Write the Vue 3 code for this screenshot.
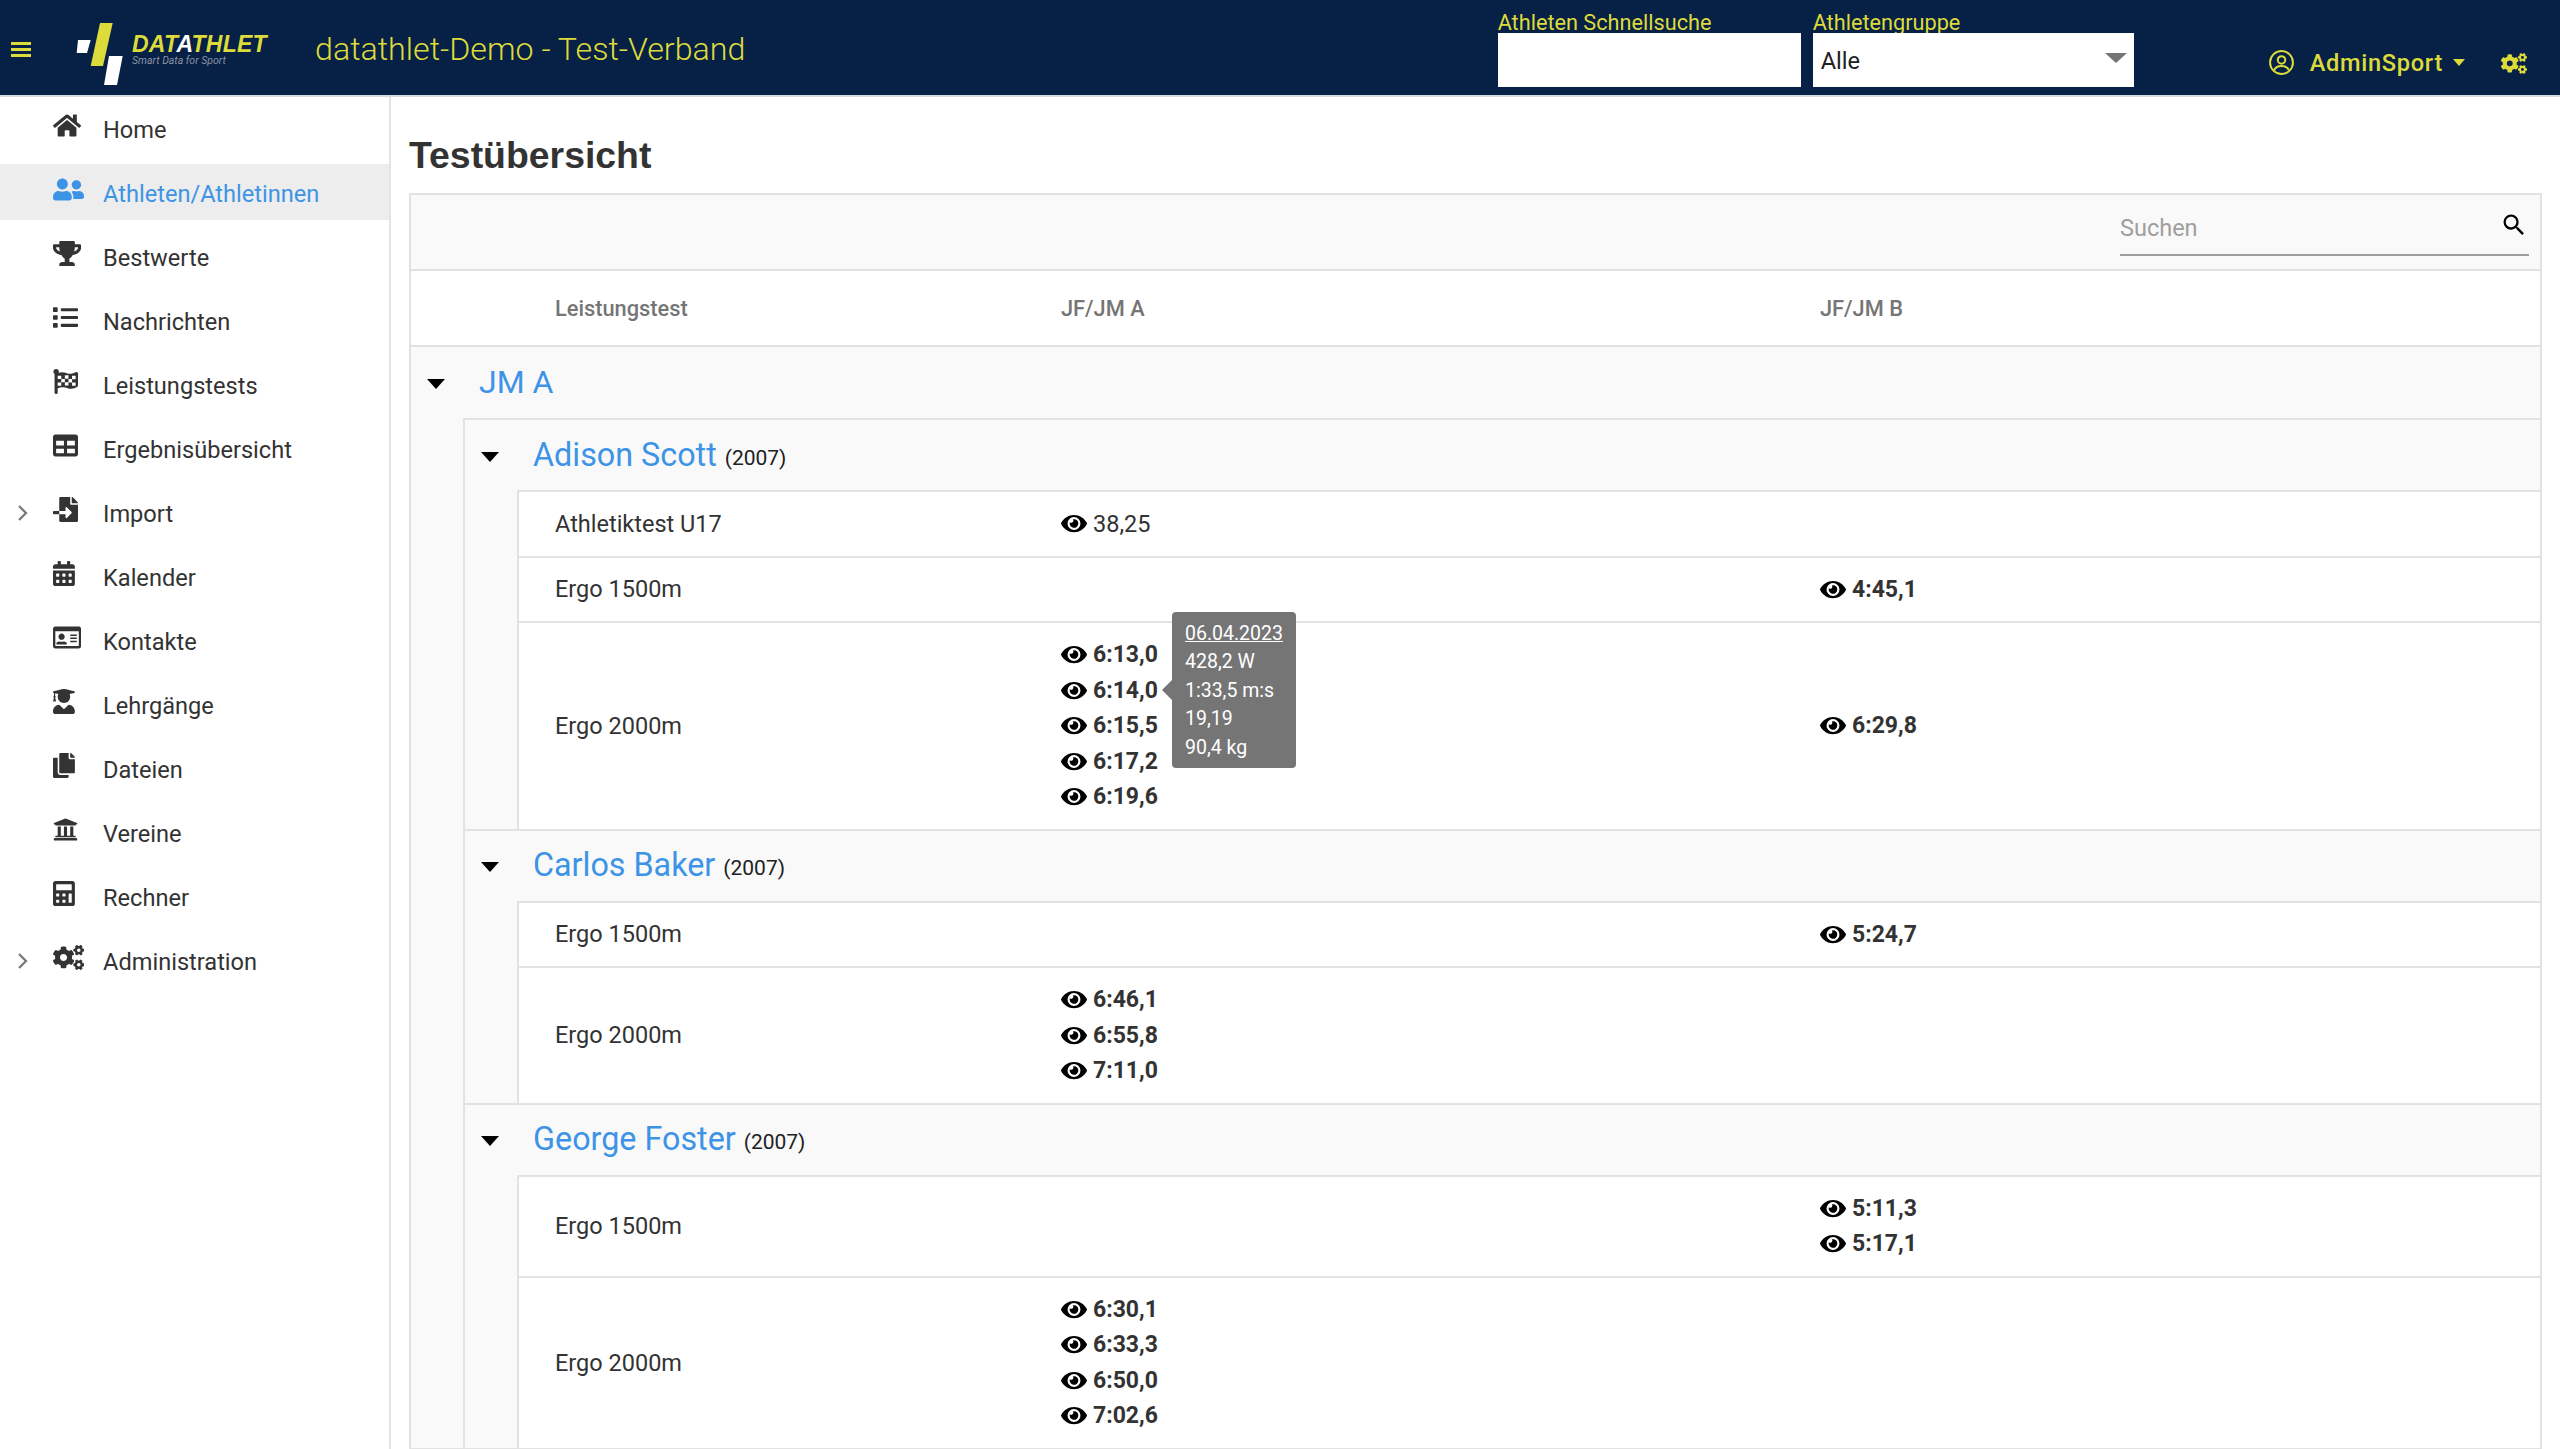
<script setup>
const icons = {
  home: { w: 576, d: 'M280.37 148.26L96 300.11V464a16 16 0 0 0 16 16l112.06-.29a16 16 0 0 0 15.92-16V368a16 16 0 0 1 16-16h64a16 16 0 0 1 16 16v95.64a16 16 0 0 0 16 16.05L464 480a16 16 0 0 0 16-16V300L295.67 148.26a12.19 12.19 0 0 0-15.3 0zM571.6 251.47L488 182.56V44.05a12 12 0 0 0-12-12h-56a12 12 0 0 0-12 12v72.61L318.47 43a48 48 0 0 0-61 0L4.34 251.47a12 12 0 0 0-1.6 16.9l25.5 31A12 12 0 0 0 45.15 301l235.22-193.74a12.19 12.19 0 0 1 15.3 0L530.9 301a12 12 0 0 0 16.9-1.6l25.5-31a12 12 0 0 0-1.7-16.93z' },
  friends: { w: 640, d: 'M192 256c61.9 0 112-50.1 112-112S253.9 32 192 32 80 82.1 80 144s50.1 112 112 112zm76.8 32h-8.3c-20.8 10-43.9 16-68.5 16s-47.6-6-68.5-16h-8.3C51.6 288 0 339.6 0 403.2V432c0 26.5 21.5 48 48 48h288c26.5 0 48-21.5 48-48v-28.8c0-63.6-51.6-115.2-115.2-115.2zM480 256c53 0 96-43 96-96s-43-96-96-96-96 43-96 96 43 96 96 96zm48 32h-3.8c-13.9 4.8-28.6 8-44.2 8s-30.3-3.2-44.2-8H432c-20.4 0-39.2 5.9-55.7 15.4 24.4 26.3 39.7 61.2 39.7 99.8v38.4c0 2.2-.5 4.3-.6 6.4H592c26.5 0 48-21.5 48-48 0-61.9-50.1-112-112-112z' },
  trophy: { w: 576, d: 'M552 64H448V24c0-13.3-10.7-24-24-24H152c-13.3 0-24 10.7-24 24v40H24C10.7 64 0 74.7 0 88v56c0 35.7 22.5 72.4 61.9 100.7 31.5 22.7 69.8 37.1 110 41.7C203.3 338.5 240 360 240 360v72h-48c-35.3 0-64 20.7-64 56v12c0 6.6 5.4 12 12 12h296c6.6 0 12-5.4 12-12v-12c0-35.3-28.7-56-64-56h-48v-72s36.7-21.5 68.1-73.6c40.3-4.6 78.6-19 110-41.7 39.3-28.3 61.9-65 61.9-100.7V88c0-13.3-10.7-24-24-24zM99.3 192.8C74.9 175.2 64 155.6 64 144v-16h64.2c1 32.6 5.8 61.2 12.8 86.2-15.1-5.2-29.2-12.4-41.7-21.4zM512 144c0 16.1-17.7 36.1-35.3 48.8-12.5 9-26.7 16.2-41.8 21.4 7-25 11.8-53.6 12.8-86.2H512v16z' },
  list: { w: 512, d: 'M80 368H16a16 16 0 0 0-16 16v64a16 16 0 0 0 16 16h64a16 16 0 0 0 16-16v-64a16 16 0 0 0-16-16zm0-320H16A16 16 0 0 0 0 64v64a16 16 0 0 0 16 16h64a16 16 0 0 0 16-16V64a16 16 0 0 0-16-16zm0 160H16a16 16 0 0 0-16 16v64a16 16 0 0 0 16 16h64a16 16 0 0 0 16-16v-64a16 16 0 0 0-16-16zm416 176H176a16 16 0 0 0-16 16v32a16 16 0 0 0 16 16h320a16 16 0 0 0 16-16v-32a16 16 0 0 0-16-16zm0-320H176a16 16 0 0 0-16 16v32a16 16 0 0 0 16 16h320a16 16 0 0 0 16-16V80a16 16 0 0 0-16-16zm0 160H176a16 16 0 0 0-16 16v32a16 16 0 0 0 16 16h320a16 16 0 0 0 16-16v-32a16 16 0 0 0-16-16z' },
  flag: { w: 512, rule: 'evenodd', d: 'M466.5 66.9c-34.3 15.9-76.5 31.9-117 31.9C296 98.8 251.7 64 184.3 64c-25 0-47.3 4.4-68 12 2.8-7.3 4.1-15.2 3.6-23.6C118.1 24 94.8 1.2 66.3 0 34.3-1.3 8 24.3 8 56c0 19 9.5 35.8 24 45.9V488c0 13.3 10.7 24 24 24h16c13.3 0 24-10.7 24-24v-94.4c28.3-12.1 63.6-22.1 114.4-22.1 53.6 0 97.8 34.8 165.2 34.8 48.2 0 86.7-16.3 122.5-40.9 8.7-6 13.8-15.8 13.8-26.4V95.9c.1-23.3-24.2-38.8-45.4-29zM96 138h74v68H96zM243 128h74v72h-74zM390 140h74v68h-74zM170 206h73v64h-73zM317 206h73v70h-73zM96 275h74v68H96zM243 270h74v70h-74zM390 276h74v66h-74z' },
  table: { w: 512, d: 'M464 32H48C21.49 32 0 53.49 0 80v352c0 26.51 21.49 48 48 48h416c26.51 0 48-21.49 48-48V80c0-26.51-21.49-48-48-48zM224 416H64v-96h160v96zm0-160H64v-96h160v96zm224 160H288v-96h160v96zm0-160H288v-96h160v96z' },
  fileImport: { w: 512, d: 'M16 288c-8.8 0-16 7.2-16 16v32c0 8.8 7.2 16 16 16h112v-64zm489-183L407.1 7c-4.5-4.5-10.6-7-17-7H384v128h128v-6.1c0-6.3-2.5-12.4-7-16.9zm-153 31V0H152c-13.3 0-24 10.7-24 24v264h128v-65.2c0-14.3 17.3-21.4 27.4-11.3L379 308c6.6 6.7 6.6 17.4 0 24l-95.7 96.4c-10.1 10.1-27.4 3-27.4-11.3V352H128v136c0 13.3 10.7 24 24 24h336c13.3 0 24-10.7 24-24V160H376c-13.2 0-24-10.8-24-24z' },
  calendar: { w: 448, d: 'M0 464c0 26.5 21.5 48 48 48h352c26.5 0 48-21.5 48-48V192H0v272zm320-196c0-6.6 5.4-12 12-12h40c6.6 0 12 5.4 12 12v40c0 6.6-5.4 12-12 12h-40c-6.6 0-12-5.4-12-12v-40zm0 128c0-6.6 5.4-12 12-12h40c6.6 0 12 5.4 12 12v40c0 6.6-5.4 12-12 12h-40c-6.6 0-12-5.4-12-12v-40zM192 268c0-6.6 5.4-12 12-12h40c6.6 0 12 5.4 12 12v40c0 6.6-5.4 12-12 12h-40c-6.6 0-12-5.4-12-12v-40zm0 128c0-6.6 5.4-12 12-12h40c6.6 0 12 5.4 12 12v40c0 6.6-5.4 12-12 12h-40c-6.6 0-12-5.4-12-12v-40zM64 268c0-6.6 5.4-12 12-12h40c6.6 0 12 5.4 12 12v40c0 6.6-5.4 12-12 12H76c-6.6 0-12-5.4-12-12v-40zm0 128c0-6.6 5.4-12 12-12h40c6.6 0 12 5.4 12 12v40c0 6.6-5.4 12-12 12H76c-6.6 0-12-5.4-12-12v-40zM400 64h-48V16c0-8.8-7.2-16-16-16h-32c-8.8 0-16 7.2-16 16v48H160V16c0-8.8-7.2-16-16-16h-32c-8.8 0-16 7.2-16 16v48H48C21.5 64 0 85.5 0 112v48h448v-48c0-26.5-21.5-48-48-48z' },
  idCard: { w: 576, d: 'M528 32H48C21.5 32 0 53.5 0 80v352c0 26.5 21.5 48 48 48h480c26.5 0 48-21.5 48-48V80c0-26.5-21.5-48-48-48zm-6 400H54c-3.3 0-6-2.7-6-6V128h480v298c0 3.3-2.7 6-6 6zM352 200c0-4.4 3.6-8 8-8h120c4.4 0 8 3.6 8 8v16c0 4.4-3.6 8-8 8H360c-4.4 0-8-3.6-8-8v-16zm0 64c0-4.4 3.6-8 8-8h120c4.4 0 8 3.6 8 8v16c0 4.4-3.6 8-8 8H360c-4.4 0-8-3.6-8-8v-16zm0 64c0-4.4 3.6-8 8-8h120c4.4 0 8 3.6 8 8v16c0 4.4-3.6 8-8 8H360c-4.4 0-8-3.6-8-8v-16zM176 176c35.3 0 64 28.7 64 64s-28.7 64-64 64-64-28.7-64-64 28.7-64 64-64zM67.1 380.2C75.5 354.5 99.6 336 128 336h8.2c12.3 5.1 25.7 8 39.8 8s27.6-2.9 39.8-8h8.2c28.4 0 52.5 18.5 60.9 44.2 3.2 9.9-5.2 19.8-15.6 19.8H82.7c-10.4 0-18.8-10-15.6-19.8z' },
  graduate: { w: 448, d: 'M319.4 320.6L224 416l-95.4-95.4C57.1 323.7 0 382.2 0 454.4v9.6c0 26.5 21.5 48 48 48h352c26.5 0 48-21.5 48-48v-9.6c0-72.2-57.1-130.7-128.6-133.8zM13.6 79.8l6.4 1.5v58.4c-7 4.2-12 11.5-12 20.3 0 8.4 4.6 15.4 11.1 19.7L3.5 242c-1.7 6.9 2.1 14 7.6 14h41.8c5.5 0 9.3-7.1 7.6-14l-15.6-62.3C51.4 175.4 56 168.4 56 160c0-8.8-5-16.1-12-20.3V87.1l66 15.9c-8.6 17.2-14 36.4-14 57 0 70.7 57.3 128 128 128s128-57.3 128-128c0-20.6-5.3-39.8-14-57l96.3-23.2c18.2-4.4 18.2-27.1 0-31.5l-190.4-46c-13-3.1-26.7-3.1-39.7 0L13.6 48.2c-18.1 4.4-18.1 27.2 0 31.6z' },
  copy: { w: 448, d: 'M320 448v40c0 13.255-10.745 24-24 24H24c-13.255 0-24-10.745-24-24V120c0-13.255 10.745-24 24-24h72v296c0 30.879 25.121 56 56 56h168zm0-344V0H152c-13.255 0-24 10.745-24 24v368c0 13.255 10.745 24 24 24h272c13.255 0 24-10.745 24-24V128H344c-13.2 0-24-10.8-24-24zm120.971-31.029L375.029 7.029A24 24 0 0 0 358.059 0H352v96h96v-6.059a24 24 0 0 0-7.029-16.97z' },
  university: { w: 512, d: 'M496 128v16a8 8 0 0 1-8 8h-24v12c0 6.627-5.373 12-12 12H60c-6.627 0-12-5.373-12-12v-12H24a8 8 0 0 1-8-8v-16a8 8 0 0 1 4.941-7.392l232-88a7.996 7.996 0 0 1 6.118 0l232 88A8 8 0 0 1 496 128zm-24 304H40c-13.255 0-24 10.745-24 24v16a8 8 0 0 0 8 8h464a8 8 0 0 0 8-8v-16c0-13.255-10.745-24-24-24zM96 192v192H60c-6.627 0-12 5.373-12 12v20h416v-20c0-6.627-5.373-12-12-12h-36V192h-64v192h-64V192h-64v192h-64V192H96z' },
  calculator: { w: 448, d: 'M400 0H48C22.4 0 0 22.4 0 48v416c0 25.6 22.4 48 48 48h352c25.6 0 48-22.4 48-48V48c0-25.6-22.4-48-48-48zM128 435c0 6.4-6.4 12.8-12.8 12.8H76.8c-6.4 0-12.8-6.4-12.8-12.8v-38.4c0-6.4 6.4-12.8 12.8-12.8h38.4c6.4 0 12.8 6.4 12.8 12.8V435zm0-128c0 6.4-6.4 12.8-12.8 12.8H76.8c-6.4 0-12.8-6.4-12.8-12.8v-38.4c0-6.4 6.4-12.8 12.8-12.8h38.4c6.4 0 12.8 6.4 12.8 12.8V307zm128 128c0 6.4-6.4 12.8-12.8 12.8h-38.4c-6.4 0-12.8-6.4-12.8-12.8v-38.4c0-6.4 6.4-12.8 12.8-12.8h38.4c6.4 0 12.8 6.4 12.8 12.8V435zm0-128c0 6.4-6.4 12.8-12.8 12.8h-38.4c-6.4 0-12.8-6.4-12.8-12.8v-38.4c0-6.4 6.4-12.8 12.8-12.8h38.4c6.4 0 12.8 6.4 12.8 12.8V307zm128 128c0 6.4-6.4 12.8-12.8 12.8h-38.4c-6.4 0-12.8-6.4-12.8-12.8V268.8c0-6.4 6.4-12.8 12.8-12.8h38.4c6.4 0 12.8 6.4 12.8 12.8V435zm0-256c0 6.4-6.4 12.8-12.8 12.8H76.8c-6.4 0-12.8-6.4-12.8-12.8V76.8C64 70.4 70.4 64 76.8 64h294.4c6.4 0 12.8 6.4 12.8 12.8V179z' },
  cogs: { w: 640, d: 'M512.1 191l-8.2 14.3c-3 5.3-9.4 7.5-15.1 5.4-11.8-4.4-22.6-10.7-32.1-18.6-4.6-3.8-5.8-10.5-2.8-15.7l8.2-14.3c-6.9-8-12.3-17.3-15.9-27.4h-16.5c-6 0-11.2-4.3-12.2-10.3-2-12-2.1-24.6 0-37.1 1-6 6.2-10.4 12.2-10.4h16.5c3.6-10.1 9-19.4 15.9-27.4l-8.2-14.3c-3-5.2-1.9-11.9 2.8-15.7 9.5-7.9 20.4-14.2 32.1-18.6 5.7-2.1 12.1.1 15.1 5.4l8.2 14.3c10.5-1.9 21.2-1.9 31.7 0L552 6.3c3-5.3 9.4-7.5 15.1-5.4 11.8 4.4 22.6 10.7 32.1 18.6 4.6 3.8 5.8 10.5 2.8 15.7l-8.2 14.3c6.9 8 12.3 17.3 15.9 27.4h16.5c6 0 11.2 4.3 12.2 10.3 2 12 2.1 24.6 0 37.1-1 6-6.2 10.4-12.2 10.4h-16.5c-3.6 10.1-9 19.4-15.9 27.4l8.2 14.3c3 5.2 1.9 11.9-2.8 15.7-9.5 7.9-20.4 14.2-32.1 18.6-5.7 2.1-12.1-.1-15.1-5.4l-8.2-14.3c-10.4 1.9-21.2 1.9-31.7 0zm-10.5-58.8c38.5 29.6 82.4-14.3 52.8-52.8-38.5-29.7-82.4 14.3-52.8 52.8zM386.3 286.1l33.7 16.8c10.1 5.8 14.5 18.1 10.5 29.1-8.9 24.2-26.4 46.4-42.6 65.8-7.4 8.9-20.2 11.1-30.3 5.3l-29.1-16.8c-16 13.7-34.6 24.6-54.9 31.7v33.6c0 11.6-8.3 21.6-19.7 23.6-24.6 4.2-50.4 4.4-75.9 0-11.5-2-20-11.9-20-23.6V418c-20.3-7.2-38.9-18-54.9-31.7L74 403c-10 5.8-22.9 3.6-30.3-5.3-16.2-19.4-33.3-41.6-42.2-65.7-4-10.9.4-23.2 10.5-29.1l33.3-16.8c-3.9-20.9-3.9-42.4 0-63.4L12 205.8c-10.1-5.8-14.6-18.1-10.5-29 8.9-24.2 26-46.4 42.2-65.8 7.4-8.9 20.2-11.1 30.3-5.3l29.1 16.8c16-13.7 34.6-24.6 54.9-31.7V57.1c0-11.5 8.2-21.5 19.6-23.5 24.6-4.2 50.5-4.4 76-.1 11.5 2 20 11.9 20 23.6v33.6c20.3 7.2 38.9 18 54.9 31.7l29.1-16.8c10-5.8 22.9-3.6 30.3 5.3 16.2 19.4 33.2 41.6 42.1 65.8 4 10.9.1 23.2-10 29.1l-33.7 16.8c3.9 21 3.9 42.5 0 63.5zm-117.6 21.1c59.2-77-28.7-164.9-105.7-105.7-59.2 77 28.7 164.9 105.7 105.7zm243.4 182.7l-8.2 14.3c-3 5.3-9.4 7.5-15.1 5.4-11.8-4.4-22.6-10.7-32.1-18.6-4.6-3.8-5.8-10.5-2.8-15.7l8.2-14.3c-6.9-8-12.3-17.3-15.9-27.4h-16.5c-6 0-11.2-4.3-12.2-10.3-2-12-2.1-24.6 0-37.1 1-6 6.2-10.4 12.2-10.4h16.5c3.6-10.1 9-19.4 15.9-27.4l-8.2-14.3c-3-5.2-1.9-11.9 2.8-15.7 9.5-7.9 20.4-14.2 32.1-18.6 5.7-2.1 12.1.1 15.1 5.4l8.2 14.3c10.5-1.9 21.2-1.9 31.7 0l8.2-14.3c3-5.3 9.4-7.5 15.1-5.4 11.8 4.4 22.6 10.7 32.1 18.6 4.6 3.8 5.8 10.5 2.8 15.7l-8.2 14.3c6.9 8 12.3 17.3 15.9 27.4h16.5c6 0 11.2 4.3 12.2 10.3 2 12 2.1 24.6 0 37.1-1 6-6.2 10.4-12.2 10.4h-16.5c-3.6 10.1-9 19.4-15.9 27.4l8.2 14.3c3 5.2 1.9 11.9-2.8 15.7-9.5 7.9-20.4 14.2-32.1 18.6-5.7 2.1-12.1-.1-15.1-5.4l-8.2-14.3c-10.4 1.9-21.2 1.9-31.7 0zM501.6 431c38.5 29.6 82.4-14.3 52.8-52.8-38.5-29.6-82.4 14.3-52.8 52.8z' }
}
const eye = 'M572.52 241.4C518.29 135.59 410.93 64 288 64S57.68 135.64 3.48 241.41a32.35 32.35 0 0 0 0 29.19C57.71 376.41 165.07 448 288 448s230.32-71.64 284.52-177.41a32.35 32.35 0 0 0 0-29.19zM288 400a144 144 0 1 1 144-144 143.93 143.93 0 0 1-144 144zm0-240a95.31 95.31 0 0 0-25.31 3.79 47.85 47.85 0 0 1-66.9 66.9A95.78 95.78 0 1 0 288 160z'

const menu = [
  { label: 'Home', icon: 'home' },
  { label: 'Athleten/Athletinnen', icon: 'friends', active: true },
  { label: 'Bestwerte', icon: 'trophy' },
  { label: 'Nachrichten', icon: 'list' },
  { label: 'Leistungstests', icon: 'flag' },
  { label: 'Ergebnisübersicht', icon: 'table' },
  { label: 'Import', icon: 'fileImport', sub: true },
  { label: 'Kalender', icon: 'calendar' },
  { label: 'Kontakte', icon: 'idCard' },
  { label: 'Lehrgänge', icon: 'graduate' },
  { label: 'Dateien', icon: 'copy' },
  { label: 'Vereine', icon: 'university' },
  { label: 'Rechner', icon: 'calculator' },
  { label: 'Administration', icon: 'cogs', sub: true }
]

const athletes = [
  {
    name: 'Adison Scott',
    year: '(2007)',
    tests: [
      { name: 'Athletiktest U17', a: ['38,25'], b: [], plain: true },
      { name: 'Ergo 1500m', a: [], b: ['4:45,1'] },
      { name: 'Ergo 2000m', a: ['6:13,0', '6:14,0', '6:15,5', '6:17,2', '6:19,6'], b: ['6:29,8'] }
    ]
  },
  {
    name: 'Carlos Baker',
    year: '(2007)',
    tests: [
      { name: 'Ergo 1500m', a: [], b: ['5:24,7'] },
      { name: 'Ergo 2000m', a: ['6:46,1', '6:55,8', '7:11,0'], b: [] }
    ]
  },
  {
    name: 'George Foster',
    year: '(2007)',
    tests: [
      { name: 'Ergo 1500m', a: [], b: ['5:11,3', '5:17,1'] },
      { name: 'Ergo 2000m', a: ['6:30,1', '6:33,3', '6:50,0', '7:02,6'], b: [] }
    ]
  }
]

const tooltip = ['428,2 W', '1:33,5 m:s', '19,19', '90,4 kg']
</script>

<template>
  <div class="page">
    <header class="topbar">
      <div class="burger"><i></i><i></i><i></i></div>
      <svg class="logo" viewBox="0 0 72 66" width="72" height="66">
        <polygon points="28,3 40.7,3 31,46 18.7,46" fill="#dddb3b" />
        <polygon points="6,20 18.7,20 15,33 4.7,33" fill="#fff" />
        <polygon points="37,36 50.7,36 45,65 32,65" fill="#fff" />
      </svg>
      <div class="brand">
        <div class="brand-name">DAT<span>A</span>THLET</div>
        <div class="brand-sub">Smart Data for Sport</div>
      </div>
      <div class="app-title">datathlet-Demo - Test-Verband</div>
      <div class="quick quick-first">
        <label>Athleten Schnellsuche</label>
        <div class="box search-box"></div>
      </div>
      <div class="quick">
        <label>Athletengruppe</label>
        <div class="box select-box"><span class="select-text">Alle</span><span class="select-arrow"></span></div>
      </div>
      <div class="user">
        <svg viewBox="0 0 24 24" width="25" height="25" fill="none" stroke="#dddb3b" stroke-width="1.9">
          <circle cx="12" cy="12" r="11" />
          <circle cx="12" cy="9.5" r="3.6" />
          <path d="M5 19.5c1-3 3.5-4.2 7-4.2s6 1.2 7 4.2" />
        </svg>
        <span>AdminSport</span>
        <i class="user-caret"></i>
      </div>
      <svg class="top-cogs" viewBox="0 0 640 512" width="26" height="21"><path :d="icons.cogs.d" fill="#dddb3b" /></svg>
    </header>

    <div class="body">
      <nav class="sidebar">
        <a v-for="m in menu" :key="m.label" class="menu-item" :class="{ active: m.active }">
          <svg v-if="m.sub" class="chevron" viewBox="0 0 12 18" width="12" height="18"><path d="M2 2l7 7-7 7" fill="none" stroke="#757575" stroke-width="2.2" /></svg>
          <span class="menu-icon">
            <svg :viewBox="`0 0 ${icons[m.icon].w} 512`" :width="icons[m.icon].w / 512 * 25" height="25">
              <path :d="icons[m.icon].d" fill="currentColor" :fill-rule="icons[m.icon].rule || 'nonzero'" />
            </svg>
          </span>
          <span class="menu-label">{{ m.label }}</span>
        </a>
      </nav>

      <main class="content">
        <h1>Testübersicht</h1>
        <div class="panel">
          <div class="toolbar">
            <div class="table-search">
              <span>Suchen</span>
              <svg viewBox="0 0 24 24" width="28" height="28"><path d="M15.5 14h-.79l-.28-.27A6.471 6.471 0 0 0 16 9.5 6.5 6.5 0 1 0 9.5 16c1.61 0 3.09-.59 4.23-1.57l.27.28v.79l5 4.99L20.49 19l-4.99-5zm-6 0C7.01 14 5 11.99 5 9.5S7.01 5 9.5 5 14 7.01 14 9.5 11.99 14 9.5 14z" /></svg>
            </div>
          </div>
          <div class="cols head-row">
            <div>Leistungstest</div>
            <div>JF/JM A</div>
            <div>JF/JM B</div>
          </div>
          <div class="group-head">
            <i class="caret"></i>
            <span class="group-name">JM A</span>
          </div>
          <div class="group-body">
            <template v-for="ath in athletes" :key="ath.name">
              <div class="athlete-head">
                <i class="caret"></i>
                <span class="athlete-name">{{ ath.name }}</span>
                <span class="year">{{ ath.year }}</span>
              </div>
              <div class="athlete-body">
                <div v-for="t in ath.tests" :key="t.name" class="cols test-row">
                  <div>{{ t.name }}</div>
                  <div>
                    <div v-for="v in t.a" :key="v" class="val" :class="{ plain: t.plain }">
                      <svg viewBox="0 0 576 512" width="26" height="23"><path :d="eye" /></svg>
                      <span>{{ v }}</span>
                      <div v-if="v === '6:14,0'" class="tip">
                        <u>06.04.2023</u>
                        <div v-for="line in tooltip" :key="line">{{ line }}</div>
                      </div>
                    </div>
                  </div>
                  <div>
                    <div v-for="v in t.b" :key="v" class="val">
                      <svg viewBox="0 0 576 512" width="26" height="23"><path :d="eye" /></svg>
                      <span>{{ v }}</span>
                    </div>
                  </div>
                </div>
              </div>
            </template>
          </div>
        </div>
      </main>
    </div>
  </div>
</template>

<style>
html, body {
  margin: 0;
  background: #fff;
}
</style>

<style scoped>
.page {
  height: 1449px;
  overflow: hidden;
  display: flex;
  flex-direction: column;
  font-family: Roboto, "Liberation Sans", sans-serif;
  font-size: 23.6px;
  color: #333;
}

.topbar {
  height: 95px;
  flex: none;
  display: flex;
  background: #072045;
  border-bottom: 2px solid #d5d9e0;
  color: #dddb3b;
}
.burger {
  margin: 42px 0 0 11px;
  width: 20px;
  height: 15px;
  display: flex;
  flex-direction: column;
  justify-content: space-between;
}
.burger i {
  display: block;
  height: 3px;
  background: #dddb3b;
}
.logo {
  margin: 20px 0 0 41px;
}
.brand {
  margin: 34px 0 0 -12px;
  width: 150px;
}
.brand-name {
  font-family: "Liberation Sans", sans-serif;
  font-weight: 700;
  font-style: italic;
  font-size: 23px;
  line-height: 20px;
  letter-spacing: 0.2px;
}
.brand-name span {
  color: #fff;
}
.brand-sub {
  font-size: 10.5px;
  line-height: 13px;
  font-style: italic;
  color: #8b94a6;
}
.app-title {
  margin: 27px 0 0 33px;
  font-size: 32.2px;
  line-height: 44px;
  font-weight: 300;
  white-space: nowrap;
}
.quick {
  margin-top: 12px;
  margin-right: 12px;
  display: flex;
  flex-direction: column;
}
.quick-first {
  margin-left: auto;
}
.quick label {
  font-size: 21.7px;
  line-height: 21px;
}
.box {
  height: 54px;
  background: #fff;
  color: #212121;
  box-sizing: border-box;
  line-height: 54px;
  padding-left: 8px;
  position: relative;
}
.select-text {
  position: relative;
  top: 1px;
}
.search-box {
  width: 303px;
}
.select-box {
  width: 321px;
}
.select-arrow {
  position: absolute;
  right: 7px;
  top: 20px;
  border-left: 11px solid transparent;
  border-right: 11px solid transparent;
  border-top: 10px solid #757575;
}
.user {
  margin: 50px 0 0 123px;
  height: 25px;
  display: flex;
  align-items: center;
  font-weight: 500;
  letter-spacing: 0.7px;
}
.user span {
  margin-left: 16px;
}
.user-caret {
  margin-left: 10px;
  border-left: 6.5px solid transparent;
  border-right: 6.5px solid transparent;
  border-top: 7px solid #dddb3b;
}
.top-cogs {
  margin: 53px 33px 0 36px;
}

.body {
  flex: 1;
  display: flex;
  min-height: 0;
}

.sidebar {
  width: 389px;
  flex: none;
  border-right: 2px solid #e4e4e4;
  padding-top: 3px;
  display: flex;
  flex-direction: column;
  gap: 8px;
}
.menu-item {
  height: 56px;
  display: flex;
  align-items: center;
  position: relative;
  color: #333;
  line-height: 30px;
}
.menu-item.active {
  background: #ededed;
  color: #3d94e6;
}
.menu-icon {
  width: 50px;
  margin-left: 53px;
  flex: none;
  display: flex;
  margin-top: -5px;
}
.menu-label {
  padding-top: 3px;
}
.chevron {
  position: absolute;
  left: 17px;
  top: 20px;
}

.content {
  flex: 1;
  min-width: 0;
  padding: 0 18px;
}
h1 {
  margin: 38px 0 17px;
  font-family: "Liberation Sans", sans-serif;
  font-size: 37.4px;
  line-height: 41px;
  font-weight: 700;
  color: #333;
}

.panel {
  border: 2px solid #e2e2e2;
  background: #f9f9f9;
  font-size: 23.5px;
}
.toolbar {
  height: 74px;
  display: flex;
  justify-content: flex-end;
  border-bottom: 2px solid #e2e2e2;
}
.table-search {
  width: 409px;
  height: 61px;
  margin-right: 11px;
  padding-top: 6px;
  display: flex;
  justify-content: space-between;
  align-items: center;
  border-bottom: 2px solid #9e9e9e;
  color: #9e9e9e;
  box-sizing: border-box;
}
.table-search svg {
  margin-right: 1px;
  margin-top: -5px;
}

.cols {
  display: grid;
  grid-template-columns: 506px 759px 1fr;
}
.head-row {
  height: 74px;
  align-items: center;
  padding-left: 144px;
  background: #fff;
  font-size: 21.8px;
  font-weight: 500;
  color: #757575;
}
.group-head {
  height: 71px;
  border-top: 2px solid #e2e2e2;
  display: flex;
  align-items: center;
  padding-left: 16px;
}
.caret {
  width: 0;
  height: 0;
  margin-top: 3px;
  border-left: 9px solid transparent;
  border-right: 9px solid transparent;
  border-top: 10px solid #000;
}
.group-name {
  margin-left: 34px;
  margin-top: -2px;
  font-size: 32px;
  color: #3d94e6;
}
.group-body {
  margin-left: 52px;
  border-left: 2px solid #e2e2e2;
}
.athlete-head {
  height: 70px;
  border-top: 2px solid #e2e2e2;
  display: flex;
  align-items: center;
  padding-left: 16px;
}
.athlete-name {
  margin-left: 34px;
  margin-top: -1px;
  font-size: 32.3px;
  color: #3d94e6;
}
.year {
  margin-left: 8px;
  margin-top: 5px;
  font-size: 21px;
  color: #212121;
}
.athlete-body {
  margin-left: 52px;
  border-left: 2px solid #e2e2e2;
  background: #fff;
}
.test-row {
  padding: 14px 0 14px 36px;
  border-top: 2px solid #e2e2e2;
  align-items: center;
}
.val {
  height: 35.5px;
  display: flex;
  align-items: center;
  gap: 6px;
  font-weight: 700;
  font-size: 23px;
  position: relative;
  white-space: nowrap;
}
.val.plain {
  font-weight: 400;
  font-size: 23.5px;
}
.tip {
  position: absolute;
  left: 111px;
  top: -61px;
  width: 124px;
  height: 156px;
  box-sizing: border-box;
  padding: 8px 0 0 13px;
  background: #757575;
  border-radius: 4px;
  color: #fff;
  font-size: 19.5px;
  font-weight: 400;
  line-height: 28.6px;
  z-index: 2;
}
.tip::before {
  content: "";
  position: absolute;
  left: -10px;
  top: 68px;
  border-top: 10px solid transparent;
  border-bottom: 10px solid transparent;
  border-right: 10px solid #757575;
}
</style>
